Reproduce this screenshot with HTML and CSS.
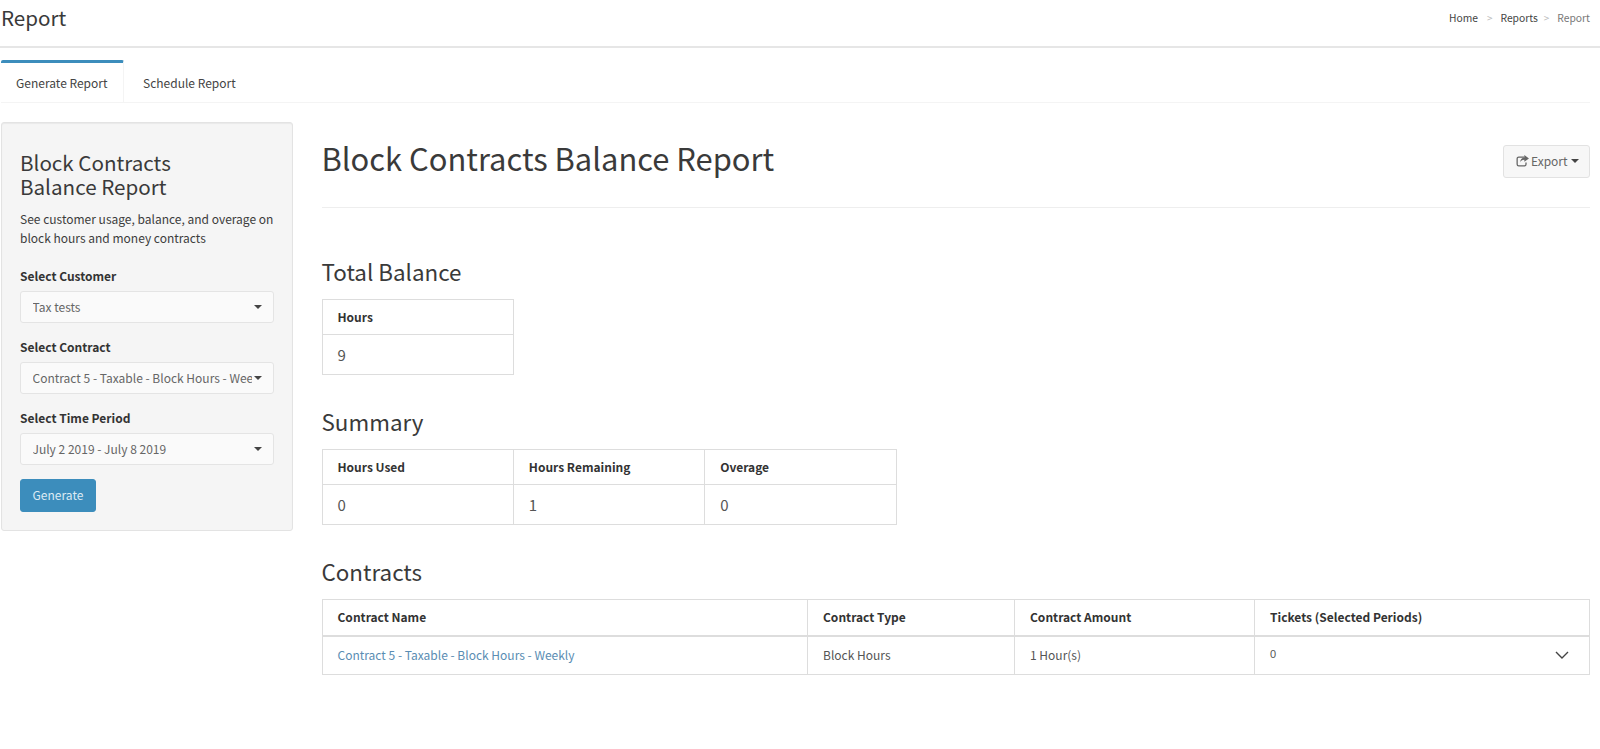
FILE: index.html
```html
<!DOCTYPE html>
<html lang="en">
<head>
<meta charset="utf-8">
<title>Report</title>
<link rel="stylesheet" href="styles.css">
</head>
<body>
<header class="topbar">
  <h1 class="page-name">Report</h1>
  <ol class="crumbs">
    <li><a href="#">Home</a></li>
    <li class="sep">&gt;</li>
    <li><a href="#">Reports</a></li>
    <li class="sep">&gt;</li>
    <li class="current">Report</li>
  </ol>
</header>
<nav class="tabs">
  <a class="tab active" href="#">Generate Report</a>
  <a class="tab" href="#">Schedule Report</a>
</nav>
<div class="layout">
  <aside class="panel">
    <h2 class="panel-title">Block Contracts<br>Balance Report</h2>
    <p class="panel-desc">See customer usage, balance, and overage on block hours and money contracts</p>
    <label class="field-label">Select Customer</label>
    <div class="select"><span class="select-text">Tax tests</span><i class="caret"></i></div>
    <label class="field-label">Select Contract</label>
    <div class="select"><span class="select-text">Contract 5 - Taxable - Block Hours - Weekly</span><i class="caret"></i></div>
    <label class="field-label">Select Time Period</label>
    <div class="select"><span class="select-text">July 2 2019 - July 8 2019</span><i class="caret"></i></div>
    <button class="btn-primary">Generate</button>
  </aside>
  <main class="main">
    <div class="report-head">
      <h2 class="report-title">Block Contracts Balance Report</h2>
      <button class="btn-export">
        <svg class="export-icon" viewBox="0 0 14 13" width="13" height="12" aria-hidden="true"><path d="M9 2.2H3a1.800 1.800 0 0 0-1.800 1.800v6A1.800 1.800 0 0 0 3 11.800h6a1.800 1.800 0 0 0 1.800-1.800V8" fill="none" stroke="currentColor" stroke-width="1.400"/><path d="M9 0l5 3.700-5 3.700V5.200c-2.500 0-3.800.9-4.500 2.900 0-3.400 1.700-5.300 4.500-5.500z" fill="currentColor"/></svg>
        <span>Export</span><i class="caret small"></i>
      </button>
    </div>
    <section class="block first">
      <h3 class="block-title">Total Balance</h3>
      <table class="data t-balance">
        <tr><th>Hours</th></tr>
        <tr><td class="big">9</td></tr>
      </table>
    </section>
    <section class="block">
      <h3 class="block-title">Summary</h3>
      <table class="data t-summary">
        <tr><th>Hours Used</th><th>Hours Remaining</th><th>Overage</th></tr>
        <tr><td class="big">0</td><td class="big">1</td><td class="big">0</td></tr>
      </table>
    </section>
    <section class="block">
      <h3 class="block-title">Contracts</h3>
      <table class="data t-contracts">
        <colgroup><col class="c1"><col class="c2"><col class="c3"><col class="c4"></colgroup>
        <tr class="head-thick"><th>Contract Name</th><th>Contract Type</th><th>Contract Amount</th><th>Tickets (Selected Periods)</th></tr>
        <tr>
          <td><a class="link" href="#">Contract 5 - Taxable - Block Hours - Weekly</a></td>
          <td>Block Hours</td>
          <td>1 Hour(s)</td>
          <td><div class="ticket-cell"><span class="ticket-count">0</span><svg class="chev" viewBox="0 0 14 8" width="14" height="8" aria-hidden="true"><path d="M1 1l6 6 6-6" fill="none" stroke="currentColor" stroke-width="1.400"/></svg></div></td>
        </tr>
      </table>
    </section>
  </main>
</div>
</body>
</html>
```
FILE: styles.css
```css
* { box-sizing: border-box; }
html, body { margin: 0; height: 749px; overflow: hidden; background: #fff; }
body {
  font-family: "Noto Sans CJK SC", "Source Sans Pro", "Noto Sans", sans-serif;
  font-size: 12px;
  line-height: 20px;
  color: #333;
}
a { color: inherit; text-decoration: none; }
h1, h2, h3, p { margin: 0; font-weight: 400; }

.topbar {
  height: 47.500px;
  display: flex;
  justify-content: space-between;
  align-items: flex-start;
  padding: 1px 10px 0 1px;
  border-bottom: 2px solid #e6e6e6;
}
.page-name { font-size: 20.600px; line-height: 32px; color: #3a3a3a; }
.crumbs {
  list-style: none;
  display: flex;
  margin: 7px 0 0;
  padding: 0;
  font-size: 10.300px;
  line-height: 20px;
  color: #444;
}
.crumbs .sep { color: #bbb; margin: 0 8px 0 9px; font-size: 10px; }
.crumbs .sep:nth-child(4) { margin: 0 8px 0 6px; }
.crumbs .current { color: #777; }

.tabs {
  display: flex;
  height: 43px;
  margin: 12px 10px 0 1px;
  border-bottom: 1px solid #f4f4f4;
}
.tab {
  display: flex;
  align-items: center;
  height: 42px;
  color: #444;
  padding: 5px 0 0 19px;
  white-space: nowrap;
}
.tab.active {
  width: 123px;
  padding: 2px 0 0 15px;
  border-top: 3px solid #3c8dbc;
  border-right: 1px solid #f4f4f4;
  border-radius: 2px 2px 0 0;
}

.layout {
  display: flex;
  align-items: flex-start;
  padding: 19px 10px 0 1px;
}
.panel {
  width: 292px;
  flex: none;
  height: 409px;
  padding: 27px 18px 0;
  background: #f5f5f5;
  border: 1px solid #e3e3e3;
  border-radius: 3px;
  box-shadow: inset 0 1px 1px rgba(0,0,0,.05);
}
.panel-title { font-size: 20.600px; line-height: 24.500px; color: #3a3a3a; }
.panel-desc { margin-top: 10px; font-size: 12px; line-height: 19px; color: #3c3c3c; }
.field-label { display: block; margin-top: 14px; font-weight: 700; font-size: 12px; line-height: 20px; color: #333; }
.panel-desc + .field-label { margin-top: 19px; }
.select {
  display: flex;
  align-items: center;
  height: 32px;
  margin-top: 5px;
  padding: 0 12px 0 11.500px;
  background: #fafafa;
  border: 1px solid #e4e4e4;
  border-radius: 3px;
  color: #666;
}
.select-text { flex: 1; min-width: 0; white-space: nowrap; overflow: hidden; padding-right: 2px; }
.caret {
  flex: none;
  display: inline-block;
  width: 0;
  height: 0;
  margin-right: -1px;
  margin-left: 2px;
  border-top: 4px solid #444;
  border-left: 4px solid transparent;
  border-right: 4px solid transparent;
}
.caret.small { margin: 0 0 0 1px; border-width: 4px 4px 0; }
.btn-primary {
  display: block;
  width: 76px;
  height: 33px;
  margin-top: 14px;
  padding: 0;
  font: inherit;
  color: #dcebf4;
  background: #3c8dbc;
  border: 1px solid #3c8dbc;
  border-radius: 3px;
}

.main { flex: 1; min-width: 0; margin-left: 28.500px; }
.report-head {
  display: flex;
  justify-content: space-between;
  align-items: flex-start;
  height: 86.500px;
  border-bottom: 1px solid #eee;
}
.report-title { font-size: 30.900px; line-height: 40px; margin-top: 16.500px; color: #3a3a3a; }
.btn-export {
  display: flex;
  align-items: center;
  gap: 2px;
  width: 87.500px;
  height: 33px;
  margin-top: 23px;
  padding: 0 0 0 12.500px;
  font: inherit;
  color: #666;
  background: #f7f7f7;
  border: 1px solid #e2e2e2;
  border-radius: 3px;
}
.export-icon { flex: none; }

.block { margin-top: 29px; }
.block.first { margin-top: 46px; }
.block-title { font-size: 22.400px; line-height: 34px; color: #3a3a3a; margin-bottom: 11px; }
.data { border-collapse: collapse; table-layout: fixed; border: 1px solid #ddd; }
.data th, .data td { border: 1px solid #ddd; padding: 0 15px; text-align: left; }
.data th { height: 35px; font-weight: 700; color: #333; }
.data td { height: 40px; color: #555; }
.data td.big { font-size: 15px; color: #555; }
.t-balance { width: 192.500px; }
.t-summary { width: 575px; }
.t-contracts { width: 100%; }
.c1 { width: 485.500px; }
.c2 { width: 207px; }
.c3 { width: 240px; }
.head-thick th { border-bottom-width: 2px; height: 36px; }
.t-contracts td { height: 39px; }
.link { color: #5a8db3; }
.ticket-cell { display: flex; align-items: center; justify-content: space-between; padding-right: 5px; }
.ticket-count { font-size: 11px; font-family: "Liberation Sans", sans-serif; position: relative; top: -1px; color: #555; }
.chev { color: #444; }
```
